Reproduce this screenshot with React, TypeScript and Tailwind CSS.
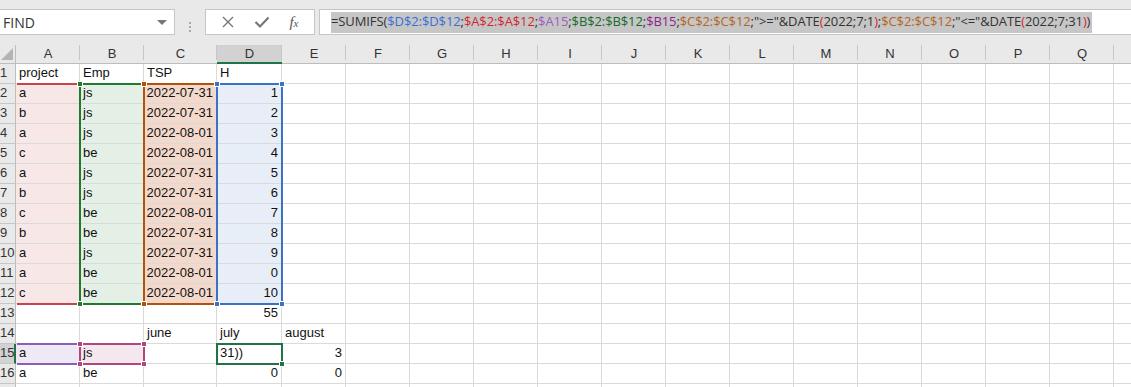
const COLS = ['A', 'B', 'C', 'D', 'E', 'F', 'G', 'H', 'I', 'J', 'K', 'L', 'M', 'N', 'O', 'P', 'Q', 'R']
const COL_X = [16, 80, 144, 217, 282, 346]
const COL_W = [64, 64, 73, 65, 64]

type Cell = { v: string; r?: boolean }

const data: Record<number, (Cell | null)[]> = {
  1: [{ v: 'project' }, { v: 'Emp' }, { v: 'TSP' }, { v: 'H' }],
  13: [null, null, null, { v: '55', r: true }],
  14: [null, null, { v: 'june' }, { v: 'july' }, { v: 'august' }],
  15: [{ v: 'a' }, { v: 'js' }, null, { v: '31))' }, { v: '3', r: true }],
  16: [{ v: 'a' }, { v: 'be' }, null, { v: '0', r: true }, { v: '0', r: true }],
}

const table: [string, string, string, number][] = [
  ['a', 'js', '2022-07-31', 1],
  ['b', 'js', '2022-07-31', 2],
  ['a', 'js', '2022-08-01', 3],
  ['c', 'be', '2022-08-01', 4],
  ['a', 'js', '2022-07-31', 5],
  ['b', 'js', '2022-07-31', 6],
  ['c', 'be', '2022-08-01', 7],
  ['b', 'be', '2022-07-31', 8],
  ['a', 'js', '2022-07-31', 9],
  ['a', 'be', '2022-08-01', 0],
  ['c', 'be', '2022-08-01', 10],
]
table.forEach((t, i) => {
  data[i + 2] = [{ v: t[0] }, { v: t[1] }, { v: t[2], r: true }, { v: String(t[3]), r: true }]
})

const FILLS = ['bg-[#f8e7e7]', 'bg-[#e4f0e5]', 'bg-[#f3d9cb]', 'bg-[#e7eef8]']

function fill(row: number, col: number) {
  if (row >= 2 && row <= 12 && col < 4) return FILLS[col]
  if (row === 15 && col === 0) return 'bg-[#eee9f4]'
  if (row === 15 && col === 1) return 'bg-[#f5e7ee]'
  return 'bg-white'
}

const formula: [string, string][] = [
  ['=SUMIFS(', 'text-[#333]'],
  ['$D$2:$D$12', 'text-[#3a6fd8]'],
  [';', 'text-[#333]'],
  ['$A$2:$A$12', 'text-[#d4262e]'],
  [';', 'text-[#333]'],
  ['$A15', 'text-[#9a5fbf]'],
  [';', 'text-[#333]'],
  ['$B$2:$B$12', 'text-[#17692f]'],
  [';', 'text-[#333]'],
  ['$B15', 'text-[#8e1f8e]'],
  [';', 'text-[#333]'],
  ['$C$2:$C$12', 'text-[#b5651d]'],
  [';">="&DATE', 'text-[#333]'],
  ['(', 'text-[#d4262e]'],
  ['2022;7;1', 'text-[#333]'],
  [')', 'text-[#d4262e]'],
  [';', 'text-[#333]'],
  ['$C$2:$C$12', 'text-[#b5651d]'],
  [';"<="&DATE', 'text-[#333]'],
  ['(', 'text-[#d4262e]'],
  ['2022;7;31', 'text-[#333]'],
  [')', 'text-[#d4262e]'],
  [')', 'text-[#333]'],
]

function Range({ col, r1, r2, color, sq }: { col: number; r1: number; r2: number; color: string; sq: string }) {
  // first column: the row header sits on top of the left edge
  const first = col === 0
  const left = first ? COL_X[col] + 1 : COL_X[col] - 1
  const top = 19 + (r1 - 1) * 20 - 1
  const width = first ? COL_W[col] : COL_W[col] + 2
  const height = (r2 - r1 + 1) * 20 + 2
  return (
    <div
      className={`absolute border-2 ${first ? 'border-l-0' : ''} ${color} pointer-events-none`}
      style={{ left, top, width, height }}
    >
      {!first && <div className={`absolute -left-[4px] -top-[4px] w-[6px] h-[6px] ${sq} border border-white`} />}
      <div className={`absolute -right-[4px] -top-[4px] w-[6px] h-[6px] ${sq} border border-white`} />
      {!first && <div className={`absolute -left-[4px] -bottom-[4px] w-[6px] h-[6px] ${sq} border border-white`} />}
      <div className={`absolute -right-[4px] -bottom-[4px] w-[6px] h-[6px] ${sq} border border-white`} />
    </div>
  )
}

export default function App() {
  const rows = Array.from({ length: 17 }, (_, i) => i + 1)
  return (
    <div className="w-[1131px] h-[387px] overflow-hidden bg-[#e9e9e9] font-['Liberation_Sans',sans-serif]">
      {/* formula bar */}
      <div className="h-[45px] pt-[9px] flex">
        <div className="w-[175px] h-[26px] bg-white border border-[#c6c6c6] border-l-0 flex items-center justify-between pl-[3px] pr-[7px]">
          <span className="font-['Open_Sans',sans-serif] text-[14px] text-[#333]">FIND</span>
          <div className="w-0 h-0 border-l-[5px] border-r-[5px] border-t-[5px] border-l-transparent border-r-transparent border-t-[#777]" />
        </div>
        <div className="w-[30px] flex flex-col items-center justify-center gap-[2px]">
          <div className="w-[2px] h-[2px] bg-[#aaa]" />
          <div className="w-[2px] h-[2px] bg-[#aaa]" />
          <div className="w-[2px] h-[2px] bg-[#aaa]" />
        </div>
        <div className="w-[110px] h-[26px] bg-white border border-[#c6c6c6] flex items-center justify-around px-[6px]">
          <svg width="14" height="14" viewBox="0 0 14 14">
            <path d="M2 2 L12 12 M12 2 L2 12" stroke="#777" strokeWidth="1.4" />
          </svg>
          <svg width="16" height="14" viewBox="0 0 16 14">
            <path d="M1.5 7 L6 11.5 L14.5 2.5" stroke="#777" strokeWidth="2.2" fill="none" />
          </svg>
          <span className="font-['Liberation_Serif',serif] italic text-[15px] text-[#555] leading-none">
            f<span className="text-[11px]">x</span>
          </span>
        </div>
        <div className="ml-[4px] flex-1 h-[26px] bg-white border border-[#c6c6c6] border-r-0 flex items-center pl-[11px]">
          <span className="bg-[#c6c6c6] h-[21px] flex items-center pr-[2px] font-['Open_Sans',sans-serif] text-[13px] whitespace-nowrap tracking-[-0.1px]">
            {formula.map(([t, c], i) => (
              <span key={i} className={c}>{t}</span>
            ))}
          </span>
        </div>
      </div>

      {/* sheet */}
      <div className="relative overflow-hidden">
        <div className="grid grid-cols-[16px_64px_64px_73px_65px_64px_64px_64px_64px_64px_64px_64px_64px_64px_64px_64px_64px_64px_64px] grid-rows-[19px_repeat(17,20px)] text-[13px] text-[#111]">
          <div className="relative bg-[#e9e9e9] border-r border-b border-[#bdbdbd]">
            <div className="absolute right-[2px] bottom-[3px] w-0 h-0 border-b-[12px] border-l-[12px] border-b-[#b4b4b4] border-l-transparent" />
          </div>
          {COLS.map((c) => (
            <div
              key={c}
              className={`flex items-center justify-center text-[13px] text-[#333] border-b border-[#bdbdbd] ${
                c === 'D' ? 'bg-[#d2d2d2] border-b-2 border-b-[#217346]' : 'bg-[#e9e9e9]'
              }`}
            >
              <span className="relative w-full text-center">
                {c}
                <span className="absolute right-0 top-[1px] h-[15px] w-px bg-[#c6c6c6]" />
              </span>
            </div>
          ))}
          {rows.map((r) => (
            <RowCells key={r} r={r} />
          ))}
        </div>

        <Range col={0} r1={2} r2={12} color="border-[#c9424c]" sq="bg-[#c9424c]" />
        <Range col={1} r1={2} r2={12} color="border-[#1d7a2f]" sq="bg-[#1d7a2f]" />
        <Range col={2} r1={2} r2={12} color="border-[#b4520c]" sq="bg-[#b4520c]" />
        <Range col={3} r1={2} r2={12} color="border-[#3a72c4]" sq="bg-[#3a72c4]" />
        <Range col={0} r1={15} r2={15} color="border-[#8b5fb8]" sq="bg-[#8b5fb8]" />
        <Range col={1} r1={15} r2={15} color="border-[#b1467d]" sq="bg-[#b1467d]" />

        {/* active cell */}
        <div className="absolute left-[216px] top-[298px] w-[67px] h-[22px] border-2 border-[#217346]">
          <div className="absolute -right-[4px] -bottom-[4px] w-[6px] h-[6px] bg-[#217346] border border-white" />
        </div>
      </div>
    </div>
  )
}

function RowCells({ r }: { r: number }) {
  const cells = data[r] || []
  return (
    <>
      <div
        className={`flex items-end pb-[1px] text-[13px] text-[#333] border-b border-[#c6c6c6] ${
          r === 15 ? 'bg-[#d2d2d2] border-r-2 border-r-[#217346]' : 'bg-[#e9e9e9] border-r border-r-[#bdbdbd]'
        }`}
      >
        {r}
      </div>
      {COLS.map((c, ci) => {
        const cell = cells[ci]
        return (
          <div
            key={c}
            className={`flex items-end pb-[1px] px-[3px] border-r border-b border-[#dadada] whitespace-nowrap overflow-visible ${fill(r, ci)} ${
              cell?.r ? 'justify-end' : 'justify-start'
            }`}
          >
            {cell?.v}
          </div>
        )
      })}
    </>
  )
}
